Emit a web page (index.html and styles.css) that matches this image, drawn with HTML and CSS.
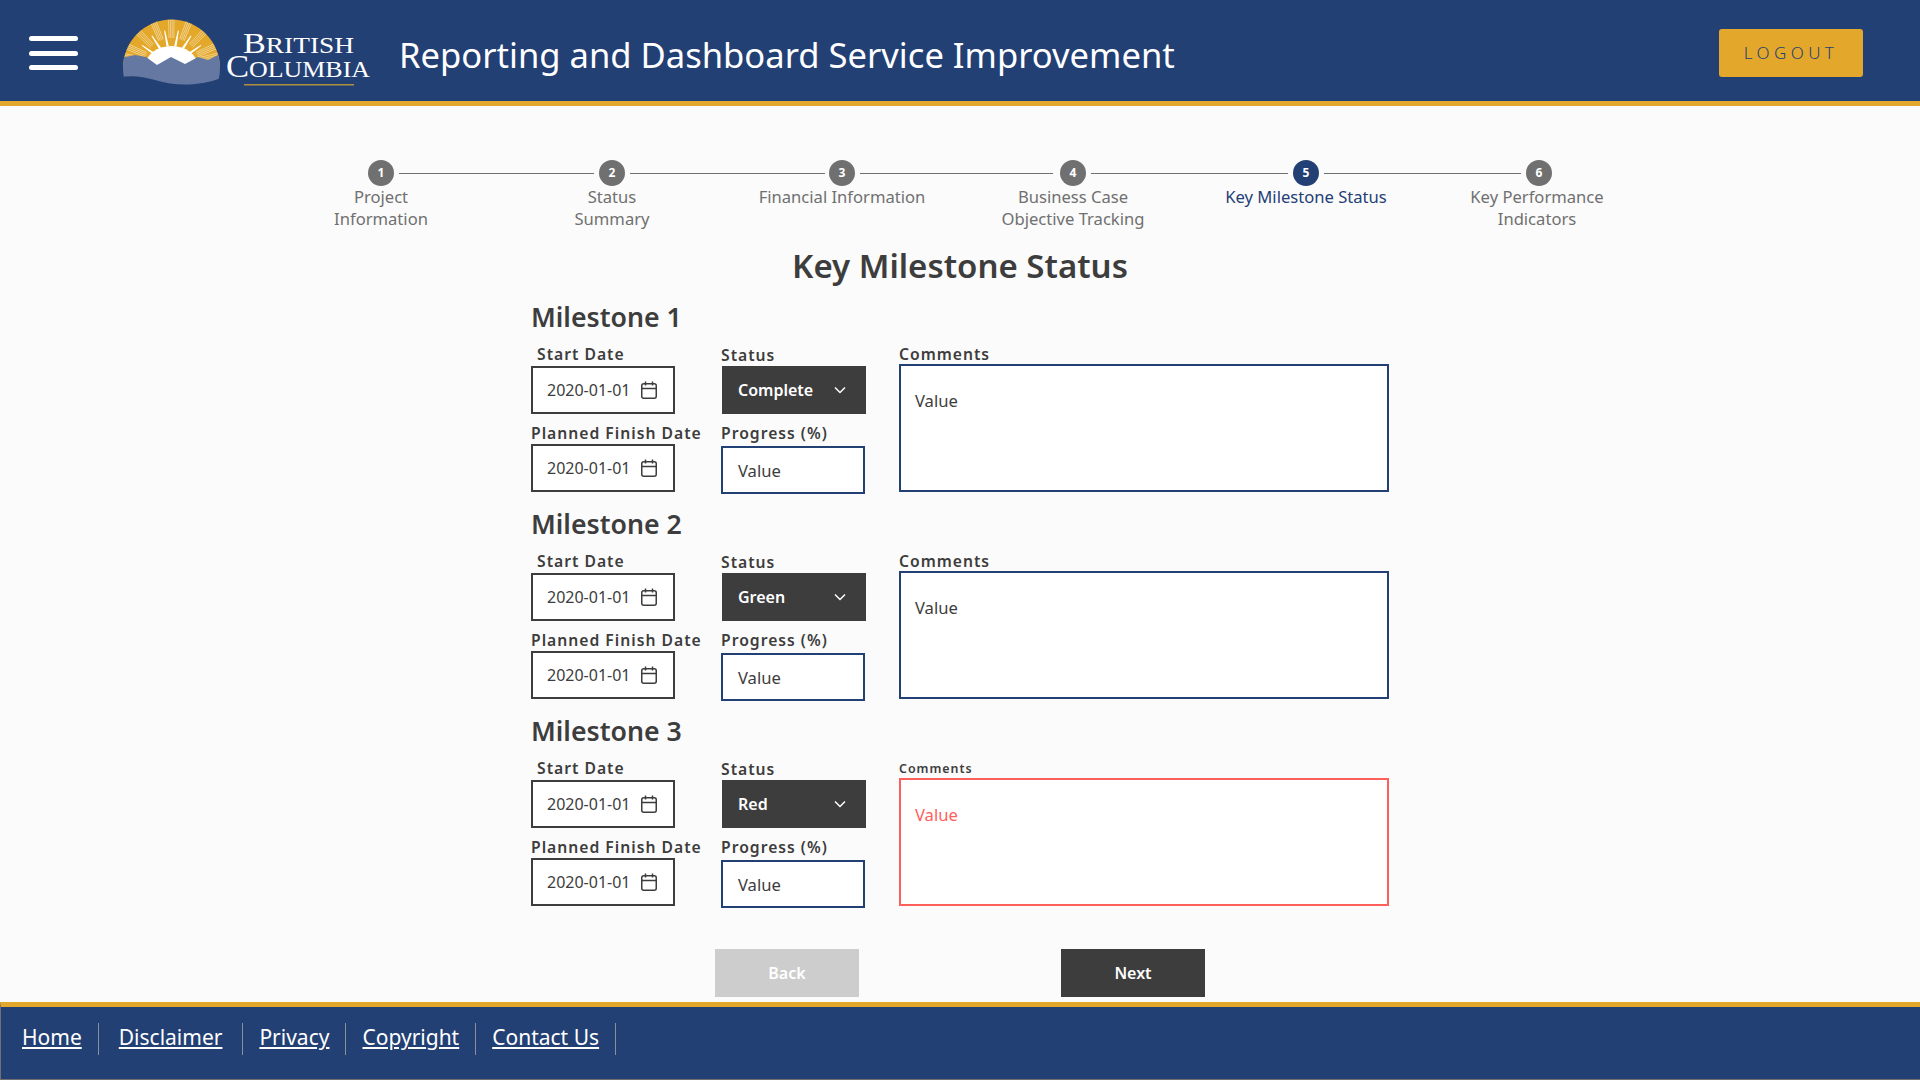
FILE: index.html
```html
<!DOCTYPE html>
<html lang="en">
<head>
    <meta charset="UTF-8">
    <title>Reporting and Dashboard Service Improvement</title>
    <link rel="stylesheet" href="styles.css">
</head>
<body>
    <header class="topbar">
        <div class="burger"><span></span><span></span><span></span></div>
        <svg class="logo" width="250" height="70" viewBox="120 18 250 70">
            <defs>
                <clipPath id="dome"><circle cx="171.5" cy="68" r="48.5"/></clipPath>
                <polygon id="ray" points="170.3,46 172.7,46 172,30 171,30" fill="#fff"/>
                <g id="hatch" stroke="#fff" stroke-width="0.6" opacity="0.7">
                    <line x1="169" y1="38" x2="168.5" y2="18"/>
                    <line x1="170.6" y1="38" x2="170.4" y2="18"/>
                    <line x1="172.2" y1="38" x2="172.2" y2="18"/>
                    <line x1="173.8" y1="38" x2="174" y2="18"/>
                </g>
            </defs>
            <g clip-path="url(#dome)">
                <rect x="120" y="18" width="104" height="50" fill="#e3a82b"/>
                <use href="#hatch" transform="rotate(-78 171.5 66)"/>
                <use href="#hatch" transform="rotate(-66 171.5 66)"/>
                <use href="#hatch" transform="rotate(-44 171.5 66)"/>
                <use href="#hatch" transform="rotate(-22 171.5 66)"/>
                <use href="#hatch"/>
                <use href="#hatch" transform="rotate(22 171.5 66)"/>
                <use href="#hatch" transform="rotate(44 171.5 66)"/>
                <use href="#hatch" transform="rotate(66 171.5 66)"/>
                <use href="#hatch" transform="rotate(78 171.5 66)"/>
                <use href="#ray" transform="rotate(-55 171.5 66)"/>
                <use href="#ray" transform="rotate(-33 171.5 66)"/>
                <use href="#ray" transform="rotate(-11 171.5 66)"/>
                <use href="#ray" transform="rotate(11 171.5 66)"/>
                <use href="#ray" transform="rotate(33 171.5 66)"/>
                <use href="#ray" transform="rotate(55 171.5 66)"/>
                <ellipse cx="171.5" cy="66" rx="26" ry="20" fill="#fff"/>
                <path d="M120 58 L135 55 L146 57 L157 65 L171 57 L185 64 L198 57 L208 60 L218 55 L224 58 L224 90 L120 90 Z" fill="#6478a1"/>
            </g>
            <path d="M120 77.5 Q135 74 155 80 T195 84 T224 76 L224 90 L120 90 Z" fill="#234075"/>
            <text class="logo-text" x="243" y="52.5" textLength="111" lengthAdjust="spacingAndGlyphs"><tspan font-size="30">B</tspan>RITISH</text>
            <text class="logo-text" x="226" y="76.5" textLength="144" lengthAdjust="spacingAndGlyphs"><tspan font-size="32">C</tspan>OLUMBIA</text>
            <rect x="244" y="84" width="110" height="1.5" fill="#b08f3e"/>
        </svg>
        <div class="app-title">Reporting and Dashboard Service Improvement</div>
        <button type="button" class="logout">LOGOUT</button>
    </header>

    <nav class="stepper">
        <div class="step"><span class="dot">1</span><span class="step-label">Project<br>Information</span></div>
        <div class="step"><span class="dot">2</span><span class="step-label">Status<br>Summary</span></div>
        <div class="step"><span class="dot">3</span><span class="step-label">Financial Information</span></div>
        <div class="step"><span class="dot">4</span><span class="step-label">Business Case<br>Objective Tracking</span></div>
        <div class="step active"><span class="dot">5</span><span class="step-label">Key Milestone Status</span></div>
        <div class="step last"><span class="dot">6</span><span class="step-label">Key Performance<br>Indicators</span></div>
    </nav>

    <h1 class="page-title">Key Milestone Status</h1>

    <form class="milestones">
        <section class="milestone">
            <h2>Milestone 1</h2>
            <div class="milestone-grid">
                <div class="col col-dates">
                    <label class="start-label">Start Date</label>
                    <div class="field date">2020-01-01
                        <svg class="cal" width="16" height="18" viewBox="0 0 16 18"><rect x="0.75" y="2.75" width="14.5" height="14.5" rx="2"/><path d="M1 7.5H15M4.5 0.5V4.5M11.5 0.5V4.5"/></svg>
                    </div>
                    <label class="second-label">Planned Finish Date</label>
                    <div class="field date">2020-01-01
                        <svg class="cal" width="16" height="18" viewBox="0 0 16 18"><rect x="0.75" y="2.75" width="14.5" height="14.5" rx="2"/><path d="M1 7.5H15M4.5 0.5V4.5M11.5 0.5V4.5"/></svg>
                    </div>
                </div>
                <div class="col col-status">
                    <label class="start-label status-label">Status</label>
                    <div class="field dropdown">Complete
                        <svg class="chev" width="12" height="8" viewBox="0 0 12 8"><path d="M1 1.5L6 6.5L11 1.5"/></svg>
                    </div>
                    <label class="second-label">Progress (%)</label>
                    <div class="field progress">Value</div>
                </div>
                <div class="col col-comments">
                    <label class="comments-label">Comments</label>
                    <div class="field comments">Value</div>
                </div>
            </div>
        </section>

        <section class="milestone">
            <h2>Milestone 2</h2>
            <div class="milestone-grid">
                <div class="col col-dates">
                    <label class="start-label">Start Date</label>
                    <div class="field date">2020-01-01
                        <svg class="cal" width="16" height="18" viewBox="0 0 16 18"><rect x="0.75" y="2.75" width="14.5" height="14.5" rx="2"/><path d="M1 7.5H15M4.5 0.5V4.5M11.5 0.5V4.5"/></svg>
                    </div>
                    <label class="second-label">Planned Finish Date</label>
                    <div class="field date">2020-01-01
                        <svg class="cal" width="16" height="18" viewBox="0 0 16 18"><rect x="0.75" y="2.75" width="14.5" height="14.5" rx="2"/><path d="M1 7.5H15M4.5 0.5V4.5M11.5 0.5V4.5"/></svg>
                    </div>
                </div>
                <div class="col col-status">
                    <label class="start-label status-label">Status</label>
                    <div class="field dropdown">Green
                        <svg class="chev" width="12" height="8" viewBox="0 0 12 8"><path d="M1 1.5L6 6.5L11 1.5"/></svg>
                    </div>
                    <label class="second-label">Progress (%)</label>
                    <div class="field progress">Value</div>
                </div>
                <div class="col col-comments">
                    <label class="comments-label">Comments</label>
                    <div class="field comments">Value</div>
                </div>
            </div>
        </section>

        <section class="milestone">
            <h2>Milestone 3</h2>
            <div class="milestone-grid">
                <div class="col col-dates">
                    <label class="start-label">Start Date</label>
                    <div class="field date">2020-01-01
                        <svg class="cal" width="16" height="18" viewBox="0 0 16 18"><rect x="0.75" y="2.75" width="14.5" height="14.5" rx="2"/><path d="M1 7.5H15M4.5 0.5V4.5M11.5 0.5V4.5"/></svg>
                    </div>
                    <label class="second-label">Planned Finish Date</label>
                    <div class="field date">2020-01-01
                        <svg class="cal" width="16" height="18" viewBox="0 0 16 18"><rect x="0.75" y="2.75" width="14.5" height="14.5" rx="2"/><path d="M1 7.5H15M4.5 0.5V4.5M11.5 0.5V4.5"/></svg>
                    </div>
                </div>
                <div class="col col-status">
                    <label class="start-label status-label">Status</label>
                    <div class="field dropdown">Red
                        <svg class="chev" width="12" height="8" viewBox="0 0 12 8"><path d="M1 1.5L6 6.5L11 1.5"/></svg>
                    </div>
                    <label class="second-label">Progress (%)</label>
                    <div class="field progress">Value</div>
                </div>
                <div class="col col-comments">
                    <label class="comments-label error-label">Comments</label>
                    <div class="field comments error">Value</div>
                </div>
            </div>
        </section>
    </form>

    <div class="actions">
        <button type="button" class="btn btn-back">Back</button>
        <button type="button" class="btn btn-next">Next</button>
    </div>

    <footer class="footer">
        <a href="#" class="foot-home">Home</a>
        <a href="#" class="foot-disclaimer">Disclaimer</a>
        <a href="#" class="foot-privacy">Privacy</a>
        <a href="#" class="foot-copyright">Copyright</a>
        <a href="#" class="foot-contact">Contact Us</a>
    </footer>
</body>
</html>
```

FILE: styles.css
```css
* {
    box-sizing: border-box;
}
body {
    margin: 0;
    height: 1080px;
    display: flex;
    flex-direction: column;
    overflow: hidden;
    background-color: #fbfbfb;
    color: #3d3d3d;
    font-family: "Noto Sans", sans-serif;
}

/* header */
.topbar {
    height: 106px;
    flex: none;
    display: flex;
    align-items: center;
    padding: 5px 57px 0 29px;
    background-color: #234075;
    border-bottom: 5px solid #e3a82b;
}
.burger {
    width: 49px;
    display: flex;
    flex-direction: column;
    gap: 9.5px;
}
.burger span {
    height: 5px;
    background-color: #fff;
    border-radius: 3px;
}
.logo {
    flex: none;
    margin-left: 42px;
}
.logo-text {
    font-family: "Liberation Serif", serif;
    font-size: 24px;
    fill: #fff;
}
.app-title {
    margin-left: 29px;
    margin-top: 3px;
    font-size: 34.6px;
    color: #fff;
    white-space: nowrap;
}
.logout {
    margin-left: auto;
    width: 144px;
    height: 48px;
    padding-bottom: 2px;
    border: none;
    border-radius: 3px;
    background-color: #e3a82b;
    color: #234075;
    font-family: "Noto Sans", sans-serif;
    font-size: 17px;
    font-weight: 300;
    letter-spacing: 4.4px;
}

/* stepper */
.stepper {
    flex: none;
    display: grid;
    grid-template-columns: 231px 231px 229px 233px 233px 233px;
    margin-top: 54px;
    padding-left: 265.5px;
    height: 70px;
}
.step {
    position: relative;
    display: flex;
    flex-direction: column;
    align-items: center;
    color: #707070;
    font-size: 16.6px;
    line-height: 22px;
    text-align: center;
}
.dot {
    width: 26px;
    height: 26px;
    border-radius: 50%;
    background-color: #707070;
    color: #fff;
    font-size: 12px;
    font-weight: 700;
    line-height: 26px;
}
.step::after {
    content: "";
    position: absolute;
    top: 13px;
    left: calc(50% + 18px);
    width: calc(100% - 36px);
    height: 1px;
    background-color: #707070;
}
.step.last::after {
    display: none;
}
.step.last .step-label {
    margin-right: 4px;
}
.step-label {
    white-space: nowrap;
}
.step.active {
    color: #234075;
}
.step.active .dot {
    background-color: #234075;
}

/* form */
.page-title {
    flex: none;
    margin: 14px 0 0;
    height: 44px;
    font-size: 33px;
    font-weight: 600;
    line-height: 44px;
    text-align: center;
}
.milestones {
    flex: none;
    margin-top: 11px;
    padding-left: 531px;
}
.milestone {
    height: 207px;
}
.milestone h2 {
    margin: 0;
    height: 36px;
    font-size: 26.7px;
    font-weight: 600;
    line-height: 36px;
}
.milestone-grid {
    display: grid;
    grid-template-columns: 190px 178px 490px;
    margin-top: 9px;
}
.col {
    display: flex;
    flex-direction: column;
}
label {
    display: block;
    font-size: 15.7px;
    font-weight: 600;
    letter-spacing: 1px;
    line-height: 20px;
    white-space: nowrap;
}
.start-label {
    height: 22px;
    padding-left: 6px;
}
.status-label {
    padding-left: 0;
    padding-top: 1px;
}
.second-label {
    height: 30px;
    padding-top: 9px;
}
.comments-label {
    height: 20px;
}
.error-label {
    font-size: 12.4px;
    padding-top: 1px;
}
.field {
    display: flex;
    align-items: center;
    width: 144px;
    height: 48px;
    padding-left: 14px;
    background-color: #fff;
    font-size: 16px;
    color: #3d3d3d;
}
.date {
    border: 2.5px solid #3d3d3d;
}
.cal {
    margin-left: 10px;
    fill: none;
    stroke: #3d3d3d;
    stroke-width: 1.5;
}
.dropdown {
    margin-left: 1px;
    padding-left: 16px;
    justify-content: space-between;
    padding-right: 20px;
    background-color: #3d3d3d;
    color: #fff;
    font-weight: 600;
}
.chev {
    fill: none;
    stroke: #fff;
    stroke-width: 1.5;
}
.progress {
    margin-top: 2px;
    padding-left: 15px;
    border: 2.5px solid #234075;
    font-size: 16.6px;
}
.comments {
    width: 490px;
    height: 128px;
    align-items: flex-start;
    padding: 23px 0 0 14px;
    border: 2.5px solid #234075;
    font-size: 16.6px;
}
.comments.error {
    border-color: #ff5f5b;
    color: #ff5f5b;
}

/* buttons */
.actions {
    flex: none;
    display: flex;
    gap: 202px;
    margin-top: 29px;
    padding-left: 715px;
}
.btn {
    width: 144px;
    height: 48px;
    border: none;
    color: #fff;
    font-family: "Noto Sans", sans-serif;
    font-size: 16px;
    font-weight: 600;
}
.btn-back {
    background-color: #cdcdcd;
}
.btn-next {
    background-color: #3d3d3d;
}

/* footer */
.footer {
    margin-top: 5px;
    flex: 1;
    display: flex;
    align-items: flex-start;
    padding-top: 16px;
    background-color: #234075;
    border-top: 5px solid #e3a82b;
    border-left: 1px solid #707070;
    border-bottom: 1px solid #707070;
}
.footer a {
    height: 32px;
    padding-right: 16px;
    margin-left: 16px;
    border-right: 1px solid #8a8f9a;
    color: #fff;
    font-size: 21px;
    line-height: 28px;
}
.footer .foot-home {
    margin-left: 21px;
}
.footer .foot-disclaimer {
    margin-left: 20px;
    padding-right: 20px;
}
```
